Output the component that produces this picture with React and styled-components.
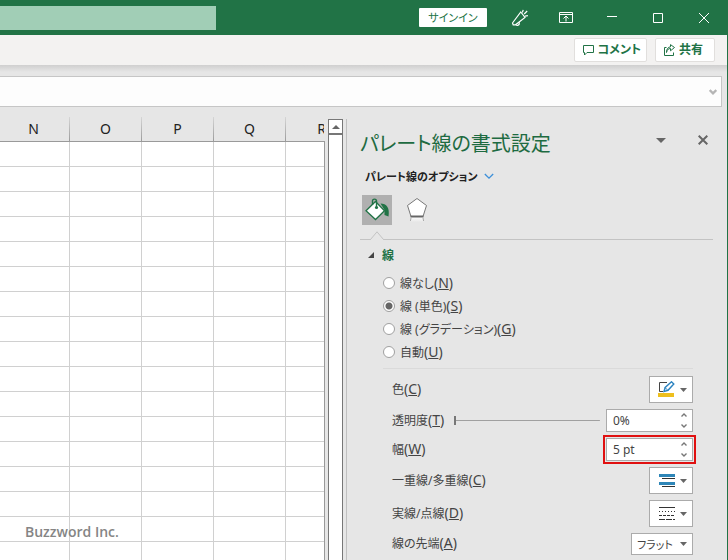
import React, { useEffect, useState } from 'react';
import styled, { createGlobalStyle, css } from 'styled-components';

const GlobalStyle = createGlobalStyle`
  * {
    box-sizing: border-box;
  }

  body {
    margin: 0;
    background: #e6e6e6;
  }

  body, button, input, select {
    font-family: "Noto Sans", "Noto Sans CJK JP", sans-serif;
    font-size: 12px;
    color: #444;
  }

  body, button, select {
    font-feature-settings: "palt";
  }

  button, input, select, fieldset {
    margin: 0;
    padding: 0;
    border: none;
  }

  button {
    background: none;
    cursor: pointer;
  }

  svg {
    display: block;
  }
`;

const Window = styled.div`
  display: flex;
  flex-direction: column;
  height: 100vh;
  overflow: hidden;
  border-right: 1px solid #217346;
`;

const TitleBar = styled.header`
  flex: none;
  display: flex;
  align-items: center;
  height: 35px;
  background: #217346;
`;

const Search = styled.input`
  width: 216px;
  height: 24px;
  margin-right: auto;
  background: #a1ceb6;
`;

const SignIn = styled.button`
  width: 68px;
  height: 19px;
  margin-right: 10px;
  border-radius: 1px;
  background: #fff;
  color: #217346;
  font-size: 11px;
  line-height: 18px;
`;

const WindowButton = styled.button`
  display: flex;
  align-items: center;
  justify-content: center;
  width: 46px;
  height: 35px;
  color: #fff;
`;

const Ribbon = styled.div`
  flex: none;
  display: flex;
  justify-content: flex-end;
  align-items: center;
  gap: 8px;
  height: 30px;
  padding-right: 12px;
  background: #f3f2f1;
`;

const RibbonButton = styled.button`
  display: flex;
  align-items: center;
  gap: 3px;
  min-width: 60px;
  height: 24px;
  padding: 0 5px 0 7px;
  border: 1px solid #e1dfdd;
  border-radius: 2px;
  background: #fff;
  color: #217346;
  font-weight: 700;
  line-height: 20px;
`;

const FormulaArea = styled.div`
  flex: none;
  padding: 11px 5px 10px 0;
  background: linear-gradient(#cfcfcf, #e6e6e6 7px);
`;

const FormulaBar = styled.div`
  display: flex;
  align-items: center;
  height: 31px;
  padding-right: 4px;
  border: 1px solid #c6c6c6;
  border-left: none;
  background: #fdfdfd;

  input {
    flex: 1;
    height: 100%;
    background: none;
  }
`;

const Body = styled.main`
  flex: 1;
  display: flex;
  min-height: 0;
`;

const Sheet = styled.section`
  position: relative;
  flex: 1;
  min-width: 0;
  overflow: hidden;
`;

const Grid = styled.table`
  margin-left: -2px;
  table-layout: fixed;
  border-collapse: separate;
  border-spacing: 0;

  th {
    height: 25px;
    padding: 0;
    border-style: solid;
    border-image: linear-gradient(#d8d8d8, #999) 1;
    border-width: 0 1px 1px 0;
    color: #222;
    font-size: 14px;
    font-weight: 400;
    line-height: 20px;
  }

  td {
    height: 25px;
    padding: 0;
    border-right: 1px solid #d0d0d0;
    border-bottom: 1px solid #d0d0d0;
    background: #fff;
  }
`;

const SheetEdge = styled.div`
  flex: none;
  width: 1px;
  margin-top: 24px;
  background: #999;
`;

const Watermark = styled.p`
  position: absolute;
  left: 25px;
  bottom: 18px;
  margin: 0;
  color: #858585;
  font-family: "Open Sans", sans-serif;
  font-size: 14px;
  font-weight: 600;
  line-height: 20px;
`;

const ScrollTrack = styled.div`
  flex: none;
  width: 15px;
  margin: 2px 3px 0;
  border: 1px solid #777;
  border-bottom: none;
  background: #fff;

  button {
    display: flex;
    align-items: center;
    justify-content: center;
    width: 13px;
    height: 15px;
    border-bottom: 2px solid #777;
  }
`;

const Pane = styled.aside`
  flex: none;
  width: 381px;
  margin-top: 2px;
  padding: 7px 14px 0 13px;
  border-left: 1px solid #c0c0c0;
  overflow: hidden;
`;

const PaneHeader = styled.div`
  display: flex;
  align-items: center;
  height: 36px;

  h1 {
    flex: 1;
    margin: 0;
    color: #1e6b41;
    font-size: 20px;
    font-weight: 400;
    line-height: 36px;
  }
`;

const HeaderTools = styled.div`
  display: flex;
  align-items: center;
  gap: 32px;
  padding: 0 5px 8px 0;
`;

const OptionsButton = styled.button`
  display: flex;
  align-items: center;
  gap: 6px;
  height: 28px;
  padding-left: 5px;
  color: #222;
  font-size: 11px;
  font-weight: 700;
`;

const Tabs = styled.div`
  position: relative;
  display: flex;
  gap: 10px;
  height: 50px;
  padding: 5px 0 0 2px;
  border-bottom: 1px solid #c3c3c3;
`;

const Tab = styled.button`
  display: flex;
  align-items: center;
  justify-content: center;
  width: 30px;
  height: 30px;
  background: ${({ $active }) => ($active ? '#b0b0b0' : 'none')};
`;

const Notch = styled.svg`
  position: absolute;
  left: 10px;
  bottom: -1px;
`;

const SectionTitle = styled.h2`
  display: flex;
  align-items: center;
  gap: 8px;
  height: 30px;
  margin: 0;
  padding-left: 8px;
  color: #217346;
  font-size: 12px;
  font-weight: 700;
`;

const RadioGroup = styled.fieldset`
  padding: 1px 0 5px 23px;
`;

const RadioLabel = styled.label`
  display: flex;
  align-items: center;
  gap: 5px;
  height: 23px;

  input {
    appearance: none;
    width: 12px;
    height: 12px;
    border: 1px solid #a0a0a0;
    border-radius: 50%;
    background: #fff;
  }

  input:checked {
    background: radial-gradient(circle, #666 3px, #fff 4px);
  }
`;

const KeyHint = styled.span`
  font-size: 14px;
  line-height: 16px;
`;

const Settings = styled.div`
  display: flex;
  flex-direction: column;
  gap: 6px;
  margin: 0 20px 0 23px;
  padding: 7px 0 0 9px;
  border-top: 1px solid #dadada;
`;

const Row = styled.div`
  display: flex;
  align-items: center;

  > label {
    margin-right: auto;
    line-height: 22px;
  }
`;

const boxed = css`
  border: 1px solid #ababab;
  background: #fff;
`;

const MenuButton = styled.button`
  ${boxed}
  display: flex;
  align-items: center;
  justify-content: flex-end;
  gap: 5px;
  width: 44px;
  height: 27px;
  padding-right: 5px;
`;

const Slider = styled.input`
  appearance: none;
  flex: 1;
  min-width: 0;
  height: 12px;
  margin: 0 6px 0 10px;
  background: linear-gradient(#a0a0a0, #a0a0a0) center / 100% 1px no-repeat;

  &::-webkit-slider-thumb {
    appearance: none;
    width: 2px;
    height: 9px;
    background: #777;
  }
`;

const SpinBox = styled.div`
  ${boxed}
  display: flex;
  width: 87px;
  height: 23px;
  outline: ${({ $marked }) => ($marked ? '2px solid #e01010' : 'none')};
  outline-offset: 1px;

  input {
    flex: 1;
    min-width: 0;
    padding-left: 6px;
    background: none;
  }
`;

const SpinButtons = styled.div`
  display: flex;
  flex-direction: column;
  width: 16px;

  button {
    flex: 1;
    display: flex;
    align-items: center;
    justify-content: center;
  }
`;

const SelectBox = styled.div`
  ${boxed}
  display: grid;
  align-items: center;
  width: 62px;
  height: 22px;

  select, svg {
    grid-area: 1 / 1;
  }

  select {
    appearance: none;
    width: 100%;
    height: 20px;
    padding-left: 5px;
    background: none;
    font-size: 11px;
  }

  svg {
    justify-self: end;
    margin-right: 5px;
    pointer-events: none;
  }
`;

const COLUMN_WIDTH = 72;
const PANE_SPACE = 401;
const COLUMNS = 'NOPQRSTUVWXYZ'.split('');
const ROWS = Array.from({ length: 40 }, (_, i) => i);

const LINE_TYPES = [
  { id: 'none', text: '線なし', accessKey: 'N' },
  { id: 'solid', text: '線 (単色)', accessKey: 'S' },
  { id: 'gradient', text: '線 (グラデーション)', accessKey: 'G' },
  { id: 'auto', text: '自動', accessKey: 'U' },
];

const countColumns = () => Math.max(1, Math.ceil((window.innerWidth - PANE_SPACE) / COLUMN_WIDTH));

const Key = ({ children }) => <KeyHint>(<u>{children}</u>)</KeyHint>;

const DownArrow = ({ width = 7, height = 4, color = '#666' }) => (
  <svg width={width} height={height} viewBox="0 0 8 4" preserveAspectRatio="none">
    <path d="M0 0h8L4 4z" fill={color} />
  </svg>
);

const Chevron = ({ up, width = 6, height = 4, color = '#777', stroke = 1.4 }) => (
  <svg width={width} height={height} viewBox="0 0 12 8" fill="none" stroke={color} strokeWidth={stroke * 2}>
    <path d={up ? 'M1 7l5-5 5 5' : 'M1 1l5 5 5-5'} />
  </svg>
);

const MegaphoneIcon = () => (
  <svg width="18" height="18" viewBox="0 0 18 18" fill="none" stroke="currentColor" strokeWidth="1.2">
    <path d="M9.8 3L14 8.500 4.500 15.800H2.200L1.500 14z" />
    <path d="M5.2 15.600c.6 1.600 3.400 1 3.200-2.400M11.400 3.500l.8-2.600M13.200 5l3-3M14 7.200l2.900-.6" />
  </svg>
);

const RibbonDisplayIcon = () => (
  <svg width="14" height="12" viewBox="0 0 14 12" fill="none" stroke="currentColor">
    <path d="M.5.5h13v10H.5zM.5 2.5h13M7 9.5v-5M4.5 6.5L7 4l2.5 2.5" />
  </svg>
);

const CommentIcon = () => (
  <svg width="13" height="12" viewBox="0 0 13 12" fill="none" stroke="currentColor">
    <path d="M1.5 1.5h10v7H5L2.5 11V8.5h-1z" />
  </svg>
);

const ShareIcon = () => (
  <svg width="13" height="12" viewBox="0 0 13 12" fill="none" stroke="currentColor">
    <path d="M3.5 3.5h-2v8h9v-3" />
    <path d="M3.500 8.500C4 5.500 5.500 4.500 7.500 4.500V6.800L11.500 3.500 7.500.6V2.800C5 3 3.500 5 3.500 8.500z" />
  </svg>
);

const BucketIcon = () => (
  <svg width="26" height="26" viewBox="0 0 26 26">
    <path d="M16.500 6.500c6 0 9.500 4 8 13l-4-1.500v-5z" fill="#217346" />
    <path d="M11.500 4.500l9 9.200-9 8.800L2 13.700z" fill="#fff" stroke="#217346" strokeWidth="1.3" />
    <path d="M8.500 8V4c0-2.500 4-2.500 4 0v6" fill="none" stroke="#217346" strokeWidth="1.4" />
    <circle cx="12.500" cy="10.500" r="1.6" fill="#217346" />
  </svg>
);

const PentagonIcon = () => (
  <svg width="22" height="26" viewBox="0 0 22 26">
    <defs>
      <linearGradient id="reflection" x1="0" y1="0" x2="0" y2="1">
        <stop offset="0" stopColor="#fff" />
        <stop offset="1" stopColor="#fff" stopOpacity="0" />
      </linearGradient>
    </defs>
    <path d="M5 20h12l1 5H4z" fill="url(#reflection)" />
    <path d="M5 21l-.6 3M17 21l.6 3" stroke="#aaa" />
    <path d="M11 1.5l9.500 7L17 19.500H5L1.500 8.500z" fill="#fff" stroke="#777" />
    <path d="M4.500 19.500h13" stroke="#666" strokeWidth="2" />
  </svg>
);

const LineColorIcon = () => (
  <svg width="17" height="17" viewBox="0 0 17 17" fill="none">
    <path d="M9 1.500H1.500v9H5" stroke="#444" />
    <path d="M6 10.500l1.200-4L13.500.8l2.300 2.200L10 9.300z" fill="#fff" stroke="#2b83c0" strokeWidth="1.4" />
    <path d="M7 6.500l3 3" stroke="#2b83c0" />
    <path d="M0 12h16v4H0z" fill="#eebf1d" />
  </svg>
);

const CompoundIcon = () => (
  <svg width="16" height="14" viewBox="0 0 16 14">
    <path d="M0 0h16v3H0zM0 8h16v3H0z" fill="#2e86b8" />
    <path d="M3 4h13v1H3zM3 12h13v1H3z" fill="#333" />
  </svg>
);

const DashIcon = () => (
  <svg width="16" height="14" viewBox="0 0 16 14" stroke="#333">
    <path d="M0 .5h16" />
    <path d="M0 4.5h16" strokeDasharray="1 2" />
    <path d="M0 8.5h16" strokeDasharray="3 1" />
    <path d="M0 12.5h16" strokeDasharray="6 1" />
  </svg>
);

const Spinner = ({ id, value, onChange, marked }) => (
  <SpinBox $marked={marked}>
    <input id={id} type="text" value={value} onChange={(e) => onChange(e.target.value)} />
    <SpinButtons>
      <button type="button" aria-label="増やす"><Chevron up /></button>
      <button type="button" aria-label="減らす"><Chevron /></button>
    </SpinButtons>
  </SpinBox>
);

const FormatPane = () => {
  const [lineType, setLineType] = useState('solid');
  const [transparency, setTransparency] = useState('0%');
  const [width, setWidth] = useState('5 pt');

  return (
    <Pane>
      <PaneHeader>
        <h1>パレート線の書式設定</h1>
        <HeaderTools>
          <button type="button" aria-label="メニュー"><DownArrow width={10} height={5} /></button>
          <button type="button" aria-label="閉じる">
            <svg width="10" height="10" viewBox="0 0 10 10" stroke="#666" strokeWidth="2">
              <path d="M.7.7l8.600 8.600M9.300.7L.7 9.300" />
            </svg>
          </button>
        </HeaderTools>
      </PaneHeader>
      <OptionsButton type="button">
        パレート線のオプション
        <Chevron width={10} height={7} color="#3c8fd9" stroke={0.8} />
      </OptionsButton>
      <Tabs>
        <Tab type="button" aria-label="塗りつぶしと線" $active><BucketIcon /></Tab>
        <Tab type="button" aria-label="効果"><PentagonIcon /></Tab>
        <Notch width="14" height="9" viewBox="0 0 14 9">
          <path d="M.5 8.5L7 .8l6.500 7.700z" fill="#e6e6e6" />
          <path d="M1 9h12" stroke="#e6e6e6" strokeWidth="2" />
          <path d="M.5 8.5L7 .8l6.500 7.700" fill="none" stroke="#c3c3c3" />
        </Notch>
      </Tabs>
      <SectionTitle>
        <svg width="6" height="6" viewBox="0 0 6 6"><path d="M6 0v6H0z" fill="#444" /></svg>
        線
      </SectionTitle>
      <RadioGroup>
        {LINE_TYPES.map(({ id, text, accessKey }) => (
          <RadioLabel key={id}>
            <input
              type="radio"
              name="lineType"
              checked={lineType === id}
              onChange={() => setLineType(id)}
            />
            <span>{text}<Key>{accessKey}</Key></span>
          </RadioLabel>
        ))}
      </RadioGroup>
      <Settings>
        <Row>
          <label htmlFor="color">色<Key>C</Key></label>
          <MenuButton id="color" type="button"><LineColorIcon /><DownArrow /></MenuButton>
        </Row>
        <Row>
          <label htmlFor="transparency">透明度<Key>T</Key></label>
          <Slider
            type="range"
            aria-label="透明度"
            value={parseInt(transparency, 10) || 0}
            onChange={(e) => setTransparency(`${e.target.value}%`)}
          />
          <Spinner id="transparency" value={transparency} onChange={setTransparency} />
        </Row>
        <Row>
          <label htmlFor="width">幅<Key>W</Key></label>
          <Spinner id="width" value={width} onChange={setWidth} marked />
        </Row>
        <Row>
          <label htmlFor="compound">一重線/多重線<Key>C</Key></label>
          <MenuButton id="compound" type="button"><CompoundIcon /><DownArrow /></MenuButton>
        </Row>
        <Row>
          <label htmlFor="dash">実線/点線<Key>D</Key></label>
          <MenuButton id="dash" type="button"><DashIcon /><DownArrow /></MenuButton>
        </Row>
        <Row>
          <label htmlFor="cap">線の先端<Key>A</Key></label>
          <SelectBox>
            <select id="cap" defaultValue="flat">
              <option value="flat">フラット</option>
            </select>
            <DownArrow />
          </SelectBox>
        </Row>
      </Settings>
    </Pane>
  );
};

const App = () => {
  const [columnCount, setColumnCount] = useState(countColumns);

  useEffect(() => {
    const onResize = () => setColumnCount(countColumns());
    window.addEventListener('resize', onResize);
    return () => window.removeEventListener('resize', onResize);
  }, []);

  const columns = COLUMNS.slice(0, columnCount);

  return (
    <>
      <GlobalStyle />
      <Window>
        <TitleBar>
          <Search type="text" aria-label="検索" />
          <SignIn type="button">サインイン</SignIn>
          <WindowButton type="button" aria-label="お知らせ"><MegaphoneIcon /></WindowButton>
          <WindowButton type="button" aria-label="リボンの表示オプション"><RibbonDisplayIcon /></WindowButton>
          <WindowButton type="button" aria-label="最小化">
            <svg width="10" height="11" stroke="currentColor"><path d="M0 4.5h10" /></svg>
          </WindowButton>
          <WindowButton type="button" aria-label="最大化">
            <svg width="10" height="10" fill="none" stroke="currentColor"><path d="M.5.5h9v9h-9z" /></svg>
          </WindowButton>
          <WindowButton type="button" aria-label="閉じる">
            <svg width="10" height="10" stroke="currentColor"><path d="M0 0l10 10M10 0L0 10" /></svg>
          </WindowButton>
        </TitleBar>
        <Ribbon>
          <RibbonButton type="button"><CommentIcon />コメント</RibbonButton>
          <RibbonButton type="button"><ShareIcon />共有</RibbonButton>
        </Ribbon>
        <FormulaArea>
          <FormulaBar>
            <input type="text" aria-label="数式バー" />
            <Chevron width={8} height={6} color="#b5b5b5" stroke={1.8} />
          </FormulaBar>
        </FormulaArea>
        <Body>
          <Sheet>
            <Grid style={{ width: columns.length * COLUMN_WIDTH }}>
              <thead>
                <tr>{columns.map((name) => <th key={name} scope="col">{name}</th>)}</tr>
              </thead>
              <tbody>
                {ROWS.map((row) => (
                  <tr key={row}>{columns.map((name) => <td key={name} />)}</tr>
                ))}
              </tbody>
            </Grid>
            <Watermark>Buzzword Inc.</Watermark>
          </Sheet>
          <SheetEdge />
          <ScrollTrack>
            <button type="button" aria-label="上へスクロール">
              <svg width="8" height="4" viewBox="0 0 8 4"><path d="M4 0l4 4H0z" fill="#666" /></svg>
            </button>
          </ScrollTrack>
          <FormatPane />
        </Body>
      </Window>
    </>
  );
};

export default App;
